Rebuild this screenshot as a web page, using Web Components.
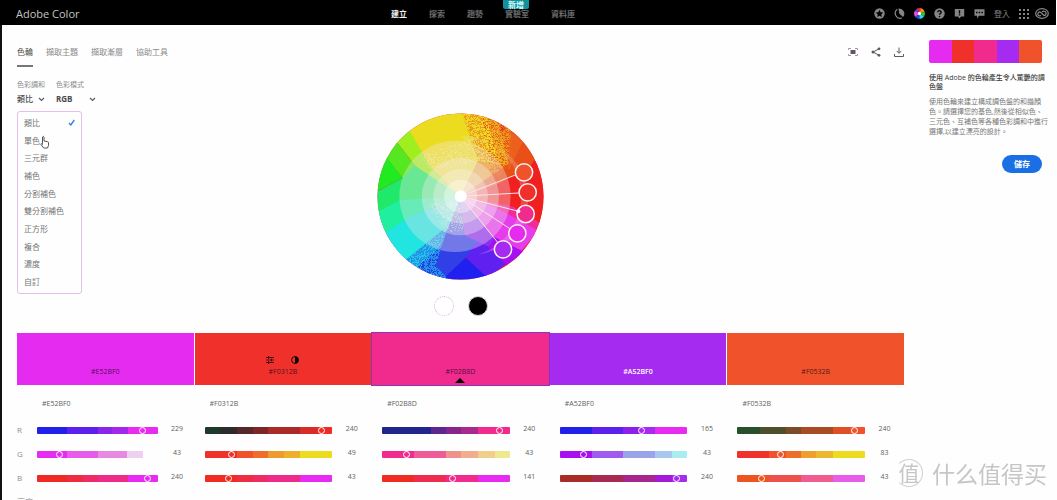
<!DOCTYPE html>
<html lang="zh-Hant">
<head>
<meta charset="utf-8">
<title>Adobe Color</title>
<style>
  html, body { margin: 0; height: 100%; overflow: hidden; background: #fefefe; }
  body {
    font-family: "Open Sans", "Noto Sans CJK TC", sans-serif;
    font-size: 8px; line-height: 12px; color: #6e6e6e;
  }
</style>
</head>
<body>
<color-page>
  <app-header slot="header"></app-header>
  <page-tabs></page-tabs>
  <harmony-bar></harmony-bar>
  <color-wheel></color-wheel>
  <palette-board></palette-board>
  <theme-panel slot="side">
    <span slot="title">使用 Adobe 的色輪產生令人驚艷的調<br>色盤</span>
    <span slot="text">使用色輪來建立構成調色盤的和諧顏<br>色。請選擇您的基色,然後從相似色、<br>三元色、互補色等各種色彩調和中進行<br>選擇,以建立漂亮的設計。</span>
  </theme-panel>
  <site-mark slot="mark"></site-mark>
</color-page>

<script>
function define(name, html, setup) {
  const t = document.createElement('template');
  t.innerHTML = html;
  customElements.define(name, class extends HTMLElement {
    constructor() {
      super();
      this.attachShadow({ mode: 'open' }).append(t.content.cloneNode(true));
    }
    connectedCallback() { if (setup) setup.call(this, this.shadowRoot); }
  });
}

/* Page frame */
define('color-page', `
<style>
  :host { display: block; min-height: 100vh; }
  .layout { display: grid; grid-template-columns: minmax(0, 1fr) 113px; gap: 25px; padding: 15px 15px 0; border-left: 2px solid #111; }
  main { min-width: 0; }
</style>
<slot name="header"></slot>
<div class="layout">
  <main><slot></slot></main>
  <slot name="side"></slot>
</div>
<slot name="mark"></slot>`);

/* Top bar */
define('app-header', `
<style>
  :host { display: flex; align-items: center; height: 25px; padding: 0 9px 0 16px; margin-right: 1px; background: #000; color: #6b6b6b; }
  a { color: inherit; text-decoration: none; }
  .brand { flex: 0 0 375px; font-size: 11px; line-height: 16px; color: #c4c4c4; padding-top: 2px; box-sizing: border-box; }
  nav { flex: 1; display: flex; gap: 22px; padding-top: 3px; font-weight: 700; white-space: nowrap; }
  nav a { position: relative; }
  nav a[aria-current] { color: #f4f4f4; }
  .badge { position: absolute; left: -2px; bottom: 11px; width: 26px; height: 9px; line-height: 9px; text-align: center; color: #d8ffff; background: #11919b; border-radius: 0 0 2px 2px; }
  .tools { display: flex; align-items: center; gap: 9px; padding-top: 2px; margin-left: auto; white-space: nowrap; }
  button { display: block; border: 0; padding: 0; background: none; width: 11px; height: 11px; }
  svg { display: block; width: 100%; height: 100%; }
  .login { margin: 0 -1px 0 0; color: #858585; }
  .tools .cc { width: 14px; margin: 0 -2px 0 -3px; }
  .lead { margin-left: 0; }
</style>
<a class="brand" href="#">Adobe Color</a>
<nav>
  <a href="#" aria-current="page">建立</a><a href="#">探索</a><a href="#">趨勢</a>
  <a href="#">實驗室<span class="badge">新增</span></a><a href="#">資料庫</a>
</nav>
<div class="tools">
  <button aria-label="Favorites"><svg viewBox="0 0 11 11"><circle cx="5.5" cy="5.5" r="5.2" fill="#858585"/><path fill="#000" d="M5.5 1.8l1.1 2.5 2.6.3-1.9 1.8.5 2.6-2.3-1.3L3.2 9l.5-2.6-1.9-1.8 2.6-.3z"/></svg></button>
  <button aria-label="Theme"><svg viewBox="0 0 11 11"><path fill="#858585" d="M4.500 .5a5.200 5.200 0 0 1 4.500 8.600L5.200 5.500z"/><path fill="none" stroke="#858585" stroke-width="1.200" d="M3.300 1.300A5 5 0 0 0 8 10"/></svg></button>
  <button aria-label="Color wheel"><svg viewBox="0 0 11 11"><g fill="none" stroke-width="3.800"><path stroke="#2948ed" d="M5.500 2A3.500 3.500 0 0 0 2.500 3.700"/><path stroke="#f04ae0" d="M2.500 3.700a3.500 3.500 0 0 0 .3 4"/><path stroke="#2948ed" d="M2.800 7.700A3.500 3.500 0 0 0 5.500 9"/><path stroke="#26dbe8" d="M5.500 9a3.500 3.500 0 0 0 3-1.700"/><path stroke="#30c830" d="M8.500 7.300a3.500 3.500 0 0 0 .3-3"/><path stroke="#f09020" d="M8.800 4.300A3.500 3.500 0 0 0 5.500 2"/><path stroke="#e92626" d="M6.500 2.200A3.500 3.500 0 0 0 3.500 2.700"/></g><circle cx="5.500" cy="5.500" r="1.700" fill="#fff"/></svg></button>
  <button aria-label="Help"><svg viewBox="0 0 11 11"><circle cx="5.500" cy="5.500" r="5.200" fill="#858585"/><path d="M3.700 4.300c.1-2.300 3.700-2 3.500.1-.1 1.100-1.700 1.200-1.700 2.400" fill="none" stroke="#000" stroke-width="1.300"/><circle cx="5.500" cy="8.500" r=".8"/></svg></button>
  <button aria-label="Notices"><svg viewBox="0 0 11 11"><path fill="#858585" d="M.8 1h9.400v7.500H7L5.500 10.600 4 8.500H.8z"/><path d="M4.800 2.200h1.400v3.300H4.800zM4.800 6.300h1.400v1.300H4.800z"/></svg></button>
  <button aria-label="Feedback"><svg viewBox="0 0 11 11"><path fill="#858585" d="M.5 1.200h10v6.600H5L3 10.400V7.800H.5z"/><path d="M2 3.700h1.500v1.500H2zm2.700 0h1.500v1.500H4.700zm2.700 0h1.500v1.500H7.400z"/></svg></button>
  <a class="login" href="#">登入</a>
  <button aria-label="Apps"><svg viewBox="0 0 11 11" fill="#858585"><path d="M1 1h2v2H1zm4 0h2v2H5zm4 0h2v2H9zM1 5h2v2H1zm4 0h2v2H5zm4 0h2v2H9zM1 9h2v2H1zm4 0h2v2H5zm4 0h2v2H9z"/></svg></button>
  <button class="cc" aria-label="Creative Cloud"><svg viewBox="0 0 14 11" fill="none" stroke="#8c8c8c" stroke-width="1.200"><ellipse cx="7" cy="5.500" rx="6.300" ry="4.800"/><path d="M9 7.500 5.800 4.400a1.900 1.900 0 1 0 .2 3M7.200 4a2.200 2.200 0 1 1 1.600 3.600"/></svg></button>
</div>`);

/* Tabs and page actions */
define('page-tabs', `
<style>
  :host { display: flex; justify-content: space-between; height: 27px; }
  nav { display: flex; gap: 13px; }
  a { color: #8a8a8a; text-decoration: none; line-height: 24px; box-sizing: border-box; height: 27px; }
  a[aria-current] { color: #4b4b4b; border-bottom: 2px solid #777; }
  .actions { display: flex; gap: 13px; padding-top: 7px; }
  button { border: 0; padding: 0; background: none; width: 10px; height: 10px; }
  svg { display: block; width: 10px; height: 10px; fill: none; stroke: #5c5c5c; }
</style>
<nav><a href="#" aria-current="page">色輪</a><a href="#">擷取主題</a><a href="#">擷取漸層</a><a href="#">協助工具</a></nav>
<div class="actions">
  <button aria-label="Full screen"><svg viewBox="0 0 10 10"><path stroke="#a98fac" d="M.5 3V1.500H3M7 1.500h2.500V3M9.500 7v1.500H7M3 8.500H.5V7"/><path fill="#5c5c5c" stroke="none" d="M2.500 3h5v4h-5z"/></svg></button>
  <button aria-label="Share"><svg viewBox="0 0 10 10"><path d="M8 1.800 2.200 5 8 8.300"/><g fill="#5c5c5c" stroke="none"><circle cx="8" cy="1.800" r="1.400"/><circle cx="2" cy="5" r="1.500"/><circle cx="8" cy="8.300" r="1.400"/></g></svg></button>
  <button aria-label="Download"><svg viewBox="0 0 10 10"><path d="M5 .5V6M2.800 4 5 6.300 7.200 4M.5 7v2.500h9V7"/></svg></button>
</div>`);

/* Harmony rule and colour mode pickers, with the open rule list */
define('harmony-bar', `
<style>
  :host { display: flex; gap: 11px; position: relative; margin-top: 12px; color: #8b8b8b; z-index: 1; }
  .field { display: flex; flex-direction: column; }
  label { font-size: 7px; line-height: 12px; height: 13px; white-space: nowrap; }
  .pick { display: flex; align-items: center; position: relative; height: 14px; }
  select { appearance: none; border: 0; padding: 0; margin: 0; background: none; width: 28px; font: 500 8px/14px "Open Sans", "Noto Sans CJK TC", sans-serif; color: #4b4b4b; }
  .mode select { width: 40px; font-weight: 700; }
  .pick svg { position: absolute; right: 0; width: 7px; height: 5px; fill: none; stroke: #5b5b66; stroke-width: 1.200; pointer-events: none; }
  ul { position: absolute; top: 32px; left: 0; box-sizing: border-box; width: 65px; height: 183px; margin: 0; padding: 2px 6px; list-style: none; display: flex; flex-direction: column; background: #fefefe; border: 1px solid #e6bdec; border-radius: 3px; }
  li { flex: 1; display: flex; align-items: center; justify-content: space-between; color: #757575; white-space: nowrap; }
  li svg { width: 7px; height: 7px; fill: none; stroke: #3386e0; stroke-width: 1.400; }
  .hand { position: absolute; left: 23px; top: 56px; width: 9px; height: 14px; fill: #fff; stroke: #555; }
</style>
<div class="field"><label for="rule">色彩調和</label><div class="pick"><select id="rule"><option>類比</option></select><svg viewBox="0 0 7 5"><path d="M1 1l2.500 2.500L6 1"/></svg></div></div>
<div class="field mode"><label for="mode">色彩模式</label><div class="pick"><select id="mode"><option>RGB</option></select><svg viewBox="0 0 7 5"><path d="M1 1l2.500 2.500L6 1"/></svg></div></div>
<ul role="listbox" aria-label="色彩調和">
  <li role="option" aria-selected="true">類比<svg viewBox="0 0 7 7"><path d="M1 4l1.800 2L6.300 1"/></svg></li>
  <li role="option">單色</li><li role="option">三元群</li><li role="option">補色</li><li role="option">分割補色</li>
  <li role="option">雙分割補色</li><li role="option">正方形</li><li role="option">複合</li><li role="option">濃度</li><li role="option">自訂</li>
</ul>
<svg class="hand" viewBox="0 0 9 14"><path d="M2.500 8.500V2q.8-1.500 1.500 0v4l3.500.6q1 .3 1 1.400v2.500L7.500 13H3.700L.8 9.300q.2-1.500 1.700.2z"/></svg>`);

/* Wheel */
define('color-wheel', `
<style>
  :host { display: flex; flex-direction: column; align-items: center; margin-top: 7px; }
  .wheel { display: block; width: 167px; height: 167px; }
  .modes { display: flex; gap: 14px; margin-top: 16px; }
  button { width: 20px; height: 20px; padding: 0; border-radius: 50%; border: 1px dotted #dcaae4; background: #fff; }
  button + button { border: 1px solid #d8d8d8; background: #000; }
</style>
<svg class="wheel" viewBox="36 37 501 501">
  <defs>
    <clipPath id="disc"><circle cx="286.500" cy="287.500" r="249"/></clipPath>
    <pattern id="dy" width="96" height="96" patternUnits="userSpaceOnUse" x="36" y="37"><path data-share=".55" fill="#ecd820"/></pattern>
    <pattern id="dr" width="96" height="96" patternUnits="userSpaceOnUse" x="36" y="37"><path data-share=".4" fill="#e8601c"/></pattern>
    <pattern id="dc" width="96" height="96" patternUnits="userSpaceOnUse" x="36" y="37"><path data-share=".4" fill="#20c8e8"/></pattern>
    <pattern id="db" width="96" height="96" patternUnits="userSpaceOnUse" x="36" y="37"><path data-share=".35" fill="#2040e8"/></pattern>
    <pattern id="dw" width="96" height="96" patternUnits="userSpaceOnUse" x="36" y="37"><path data-share=".35" fill="#f4f0d0" fill-opacity=".4"/></pattern>
  </defs>
  <g clip-path="url(#disc)">
    <path fill="#ee2030" d="M30 30h520v520H30z"/>
    <path fill="#20e5e0" d="M30 338H287v149H115z"/>
    <path fill="#ebdc20" d="M120 70 170 20H288l52 160-53 107-92-87z"/>
    <path fill="#9fee20" d="M98 128 60 90 110 40 135 92l62 108 90 87-100-60-37-32z"/>
    <path fill="#55e820" d="M98 128 60 90 20 170 70 178l42 54 75 30 100 25-95-62-42-30z"/>
    <path fill="#20ea20" d="M72 178 20 120V280l92-48z"/>
    <path fill="#20e868" d="M30 276 112 232l38-37 137 92-182 13-75 40z"/>
    <path fill="#20efa0" d="M30 338 105 298l182-11-157 64-80 55z"/>
    <path fill="#20e5e0" d="M50 404 130 350l157-63v55L115 482z"/>
    <path fill="#2490e8" d="M115 483 287 345v142l-52 60z"/>
    <path fill="url(#dc)" d="M115 483 287 345 220 440l-60 70z"/>
    <path fill="url(#db)" d="M150 500 287 390v100l-60 55z"/>
    <path fill="#2020f0" d="M242 550v-24l60-56 70 60v20z"/>
    <path fill="#3040e6" d="M240 405 287 287 385 440 310 470h-8l-60 56-30-30z"/>
    <path fill="#6020f0" d="M302 470 340 420l45 15 43 52-60 45z"/>
    <path fill="#8a30ee" d="M300 405 287 287 400 400 375 440z"/>
    <path fill="#a510f0" d="M370 440 400 390 480 455 425 492z"/>
    <path fill="#e63cec" d="M287 287 400 320 520 390 470 450 380 405z"/>
    <path fill="#f02b9a" d="M330 297 460 318 530 360 512 386 400 325z"/>
    <path fill="#f02020" d="M287 287 450 185 545 180V340l-15 30-85-52z"/>
    <path fill="#e85018" d="M287 287 430 60 520 160 500 190 400 250z"/>
    <path fill="#ec9a20" d="M288 30 390 30 430 190 287 287 340 180z"/>
    <path fill="url(#dr)" d="M345 30 440 60 440 200 380 240z"/>
    <path fill="url(#dy)" d="M288 30 365 50 400 190 340 180z"/>
    <path fill="url(#dy)" d="M365 50 440 80 430 190 395 190z" opacity=".5"/>
    <path fill="#ef6b22" d="M432 90 475 120 430 210z" opacity=".6"/>
    <circle cx="270" cy="287" r="167" fill="#f2e6ea" fill-opacity=".34"/>
    <path fill="#f2e6ea" fill-opacity=".2" d="M287 105A182 182 0 0 1 340 461 167 167 0 0 0 300 123z"/>
    <circle cx="286" cy="288" r="116" fill="#f2eef0" fill-opacity=".36"/>
    <path fill="url(#dw)" d="M165 165 330 110 340 180 200 215zM190 310 280 300 300 390 240 395z"/>
    <path fill="#f8f0e8" fill-opacity=".36" d="M287 205a82 82 0 1 1-.1 164 82 82 0 0 1 .1-164z"/>
    <path fill="#fff" fill-opacity=".36" d="M287 237a50 50 0 1 1-.1 100 50 50 0 0 1 .1-100z"/>
  </g>
  <g stroke="#fbe4e8" stroke-width="3"><path d="M287 287 451 223M287 287l174-10M287 287l170 44M287 287l146 96M287 287l111 138"/></g>
  <circle cx="287" cy="287" r="18" fill="#fff"/>
  <g stroke="#fbf2f2" stroke-width="4.500">
    <circle cx="477" cy="215" r="26" fill="#f0532b"/><circle cx="488" cy="275" r="26" fill="#f0312b"/><circle cx="482" cy="340" r="26" fill="#f02b8d"/><circle cx="457" cy="398" r="26" fill="#e52bf0"/><circle cx="414" cy="446" r="26" fill="#a52bf0"/>
  </g>
  <circle cx="460" cy="332" r="6" fill="#fff"/>
</svg>
<div class="modes"><button aria-label="White"></button><button aria-label="Black"></button></div>`, function (root) {
  /* Speckle tiles: a fixed seed keeps the grain the same on every load */
  let seed = 7;
  const next = () => (seed = (seed * 16807) % 2147483647) / 2147483647;
  for (const p of root.querySelectorAll('pattern path')) {
    let d = '';
    for (let y = 0; y < 96; y += 3)
      for (let x = 0; x < 96; x += 3)
        if (next() < +p.dataset.share) d += 'M' + x + ' ' + y + 'h3v3h-3z';
    p.setAttribute('d', d);
  }
});

/* Palette: five swatches, each with its channel sliders */
const PALETTE = [
  { hex: '#E52BF0', ch: [
    [229, '#2020ea 25 #5c20ee 50 #8a26ea 62 #a428ec 75 #e82bf0 100'],
    [43, '#e82bf0 25 #e65ce8 50 #e58ae0 74 #ecd0ee 88 #fefefe 100'],
    [240, '#ee2a22 25 #ee2c40 38 #ee2b62 50 #ee2b88 75 #e82bf0 100']] },
  { hex: '#F0312B', icons: true, ch: [
    [240, '#1d3a2a 12 #2c2c2c 25 #55282a 38 #7c2626 50 #aa2a28 75 #d82c26 88 #f02a24 100'],
    [49, '#f0302b 25 #f0532b 38 #ee6e2b 50 #ee9a2c 62 #ecb02a 75 #ecdc20 100'],
    [43, '#f02c20 25 #ee2c42 38 #ee2b62 50 #ee2b8a 75 #e82bf0 100']] },
  { hex: '#F02B8D', selected: true, ch: [
    [240, '#20268a 38 #5c2890 50 #86268c 62 #a82a8c 75 #f02b8d 100'],
    [43, '#f02b8d 25 #ee5c98 50 #f0928c 62 #efae8e 75 #f0ce8c 88 #eee88e 100'],
    [141, '#f02c20 25 #ee2c50 50 #f02b8d 75 #e82bf0 100']] },
  { hex: '#A52BF0', light: true, ch: [
    [165, '#2020ea 25 #5c20ee 50 #8a20ea 62 #a82af0 75 #e82bf0 100'],
    [43, '#a810f0 25 #a05cee 50 #9aa4e8 75 #a8c8ee 88 #a8eef0 100'],
    [240, '#aa2c26 25 #a82a50 50 #a8268c 75 #a51ad8 88 #a52bf0 100']] },
  { hex: '#F0532B', ch: [
    [240, '#28502c 18 #4e502c 38 #7a4c28 50 #a84c26 75 #e05028 88 #f0532b 100'],
    [83, '#f0302b 25 #f0532b 38 #ee6e2b 50 #eea02c 62 #ecb830 75 #ecdc20 100'],
    [43, '#ee5420 25 #ee504c 50 #ee5c90 75 #e85cea 100']] }
];
const NAMES = ['R', 'G', 'B', '亮度'];

function bands(spec) {
  const p = spec.split(' ');
  let at = 0, out = [];
  for (let i = 0; i < p.length; i += 2) {
    out.push(p[i] + ' ' + at + '% ' + p[i + 1] + '%');
    at = p[i + 1];
  }
  return 'linear-gradient(90deg,' + out.join(',') + ')';
}

define('palette-board', `
<style>
  :host { display: grid; grid-template-columns: repeat(5, minmax(0, 1fr)); column-gap: 1px; margin-top: 17px; }
</style>`, function (root) {
  PALETTE.forEach((c, i) => {
    const s = document.createElement('color-swatch');
    s.data = c;
    root.append(s);
  });
  PALETTE.forEach((c, i) => {
    const s = document.createElement('channel-sliders');
    s.data = c;
    s.first = i === 0;
    root.append(s);
  });
});

define('color-swatch', `
<style>
  :host { display: flex; flex-direction: column; align-items: center; justify-content: flex-end; position: relative; box-sizing: border-box; height: 52px; padding-bottom: 7px; font-size: 7px; line-height: 12px; color: rgba(20, 0, 20, .75); }
  :host(.light) { color: #fff; font-weight: 600; }
  :host(.selected) { box-shadow: 0 0 0 1px #8a35b8; }
  .icons { display: flex; gap: 17px; margin-bottom: 2px; }
  button { width: 8px; height: 8px; padding: 0; border: 0; background: none; }
  svg { display: block; width: 100%; height: 100%; }
  .mark { position: absolute; bottom: 2px; left: calc(50% - 5px); border: 5px solid transparent; border-top: 0; border-bottom-color: #000; }
  [hidden] { display: none; }
</style>
<div class="icons">
  <button aria-label="Sliders"><svg viewBox="0 0 8 8" fill="none" stroke="#4a0c0c"><path d="M0 1.500h8M0 4h8M0 6.500h8M2.500 0v3M5.500 2.500v3M2.500 5v3"/></svg></button>
  <button aria-label="Contrast"><svg viewBox="0 0 8 8"><circle cx="4" cy="4" r="3.400" fill="none" stroke="#200"/><path d="M4 .5a3.500 3.500 0 0 1 0 7z"/></svg></button>
</div>
<span class="hex"></span>
<i class="mark"></i>`, function (root) {
  const c = this.data;
  this.style.background = c.hex;
  this.classList.toggle('light', !!c.light);
  this.classList.toggle('selected', !!c.selected);
  root.querySelector('.icons').hidden = !c.icons;
  root.querySelector('.mark').hidden = !c.selected;
  root.querySelector('.hex').textContent = c.hex;
});

define('channel-sliders', `
<style>
  :host { display: block; padding: 13px 0 0 10px; }
  :host(.first) { padding-left: 0; }
  input { font: inherit; color: #5e5e5e; border: 0; padding: 0; margin: 0; background: none; }
  .hex { display: block; width: 60px; height: 12px; margin-left: 5px; font-size: 7px; line-height: 12px; }
  :host(.first) .hex { margin-left: 25px; }
  .rows { margin-top: 8px; }
  .row { display: flex; align-items: center; height: 24px; }
  .row:last-child { height: 28px; }
  label { flex: 0 0 20px; font-size: 8px; color: #8d8d8d; white-space: nowrap; }
  .row:last-child label { margin-bottom: 4px; }
  .num { flex: 0 0 39px; width: 39px; height: 12px; margin-bottom: 3px; text-align: center; font-size: 7px; line-height: 12px; }
  :host(.first) .num { margin-right: -3px; }
  input[type=range] { appearance: none; flex: 1; min-width: 0; height: 7px; border-radius: 1px; background: var(--bands); }
  input[type=range]::-webkit-slider-thumb { appearance: none; width: 7px; height: 7px; box-sizing: border-box; border: 1px solid #fff; border-radius: 50%; background: none; }
</style>
<input class="hex" aria-label="Hex">
<div class="rows"></div>`, function (root) {
  const c = this.data;
  this.classList.toggle('first', this.first);
  root.querySelector('.hex').value = c.hex;
  const rows = root.querySelector('.rows');
  [...c.ch, [94, '#222 25 ' + c.hex + ' 100']].forEach(([value, spec], i) => {
    const row = document.createElement('div');
    row.className = 'row';
    if (this.first) {
      const label = document.createElement('label');
      label.htmlFor = 'c' + i;
      label.textContent = NAMES[i];
      row.append(label);
    }
    const range = document.createElement('input');
    range.type = 'range';
    range.id = 'c' + i;
    range.max = i < 3 ? 255 : 100;
    range.value = value;
    range.setAttribute('aria-label', NAMES[i]);
    range.style.setProperty('--bands', bands(spec));
    const num = document.createElement('input');
    num.className = 'num';
    num.value = value;
    num.setAttribute('aria-label', NAMES[i]);
    row.append(range, num);
    rows.append(row);
  });
});

/* Side panel */
define('theme-panel', `
<style>
  :host { display: flex; flex-direction: column; font-size: 7px; white-space: nowrap; }
  .strip { display: flex; height: 23px; border-radius: 2px; overflow: hidden; }
  .strip i { flex: 1; }
  h2 { margin: 10px 0 0; font-size: 7px; line-height: 9px; font-weight: 500; color: #3c3c3c; }
  p { margin: 6px 0 0; line-height: 10px; color: #777; }
  button { align-self: flex-end; margin-top: 18px; width: 40px; height: 18px; padding: 0; border: 0; border-radius: 9px; background: #1b6fe4; color: #fff; font: 700 8px/18px "Open Sans", "Noto Sans CJK TC", sans-serif; }
</style>
<div class="strip"></div>
<h2><slot name="title"></slot></h2>
<p><slot name="text"></slot></p>
<button>儲存</button>`, function (root) {
  for (const h of ['#e52bf0', '#f0312b', '#f02b8d', '#a52bf0', '#f0532b']) {
    const i = document.createElement('i');
    i.style.background = h;
    root.querySelector('.strip').append(i);
  }
});

/* Site watermark over the page corner */
define('site-mark', `
<style>
  :host { position: fixed; right: 10px; bottom: 10px; display: flex; align-items: center; gap: 9px; color: #c6c6c6; font: 400 23px/34px "Noto Sans CJK SC", sans-serif; white-space: nowrap; }
  b { box-sizing: border-box; width: 28px; height: 28px; border: 1px solid #d0d0d0; border-left-color: transparent; border-radius: 50%; font-size: 21px; line-height: 24px; font-weight: 400; text-align: center; }
</style>
<b>值</b><span>什么值得买</span>`);
</script>
</body>
</html>
